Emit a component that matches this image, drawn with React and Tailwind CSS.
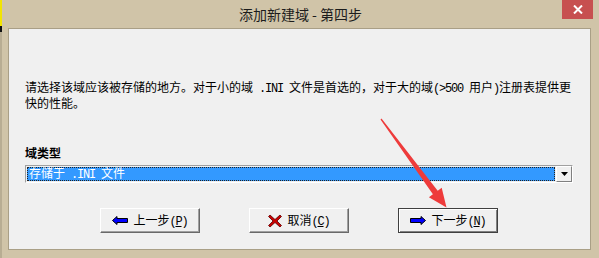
import React from "react";

const cjk = "font-['SimSun','Noto_Sans_CJK_SC',sans-serif]";

function Asc({ children }) {
  return (
    <span className="font-['Liberation_Mono',monospace] tracking-[-1.2px]">{children}</span>
  );
}

function LeftArrow() {
  return (
    <svg width="16" height="9" viewBox="0 0 16 9">
      <polygon points="0.5,4.5 5,0.5 5,2.5 15.5,2.5 15.5,6.5 5,6.5 5,8.5" fill="#0000ff" stroke="#000" strokeWidth="1" />
    </svg>
  );
}

function RightArrow() {
  return (
    <svg width="16" height="9" viewBox="0 0 16 9">
      <polygon points="15.5,4.5 11,0.5 11,2.5 0.5,2.5 0.5,6.5 11,6.5 11,8.5" fill="#0000ff" stroke="#000" strokeWidth="1" />
    </svg>
  );
}

function RedX() {
  return (
    <svg width="14" height="14" viewBox="0 0 14 14">
      <path d="M2 1 L7 5.5 L12 1 L13.5 2.5 L9 7 L13.5 11.5 L12 13 L7 8.5 L2 13 L0.5 11.5 L5 7 L0.5 2.5 Z" fill="#c80000" stroke="#5a0000" strokeWidth="0.8" />
    </svg>
  );
}

function WinButton({ icon, label, hot, isDefault }) {
  return (
    <div
      className={
        "w-[100px] h-[25px] flex items-center justify-center gap-[5px] bg-[#f0f0f0] border " +
        (isDefault
          ? "border-[#404040] shadow-[inset_1px_1px_0_#fff,inset_-1px_-1px_0_#808080]"
          : "border-t-white border-l-white border-b-[#696969] border-r-[#696969] shadow-[inset_-1px_-1px_0_#a0a0a0]")
      }
    >
      {icon}
      <span className={cjk + " text-[12px] leading-[13px] text-black whitespace-nowrap"}>
        {label}
        <Asc>
          (<span className="underline">{hot}</span>)
        </Asc>
      </span>
    </div>
  );
}

export default function App() {
  return (
    <div className="relative w-[599px] h-[258px] flex bg-[#d0c4a8] overflow-hidden">
      <div className="w-[2px] flex flex-col">
        <div className="h-[26px] bg-[#f2e400]" />
        <div className="h-[6px] bg-[#111]" />
        <div className="flex-1 bg-[#b8ad93]" />
      </div>

      <div className="flex-1 flex flex-col">
        <div className="h-[28px] flex items-start">
          <div className="flex-1 pl-[37px] h-[28px] flex items-center justify-center">
            <span className="font-['Noto_Sans_CJK_SC',sans-serif] text-[14px] text-[#1c1c1c] leading-none">
              添加新建域 - 第四步
            </span>
          </div>
          <div className="w-[31px] h-[19px] mr-[6px] bg-[#c75050] flex items-center justify-center">
            <svg width="10" height="9" viewBox="0 0 10 9">
              <path d="M1 0.5 L9 8.5 M9 0.5 L1 8.5" stroke="#fff" strokeWidth="2" />
            </svg>
          </div>
        </div>

        <div className="ml-[6px] mr-[8px] mb-[8px] flex-1 bg-[#f0f0f0] border border-[#a99f86] pl-[16px] pr-[17px] pt-[51px]">
          <p className={cjk + " text-[12px] leading-[13px] text-black whitespace-nowrap"}>
            请选择该域应该被存储的地方。对于小的域<Asc> .INI </Asc>文件是首选的，对于大的域<Asc>(&gt;500 </Asc>用户<Asc>)</Asc>注册表提供更
            <br />
            快的性能。
          </p>

          <div className={cjk + " mt-[37px] text-[12px] leading-[13px] font-bold text-black"}>域类型</div>

          <div className="mt-[6px] w-[548px] h-[18px] flex border border-t-[#a0a0a0] border-l-[#a0a0a0] border-b-white border-r-white">
            <div className="flex-1 m-[1px] bg-[#3399ff] border border-dotted border-[#222] flex items-center pl-[1px]">
              <span className={cjk + " text-[12px] leading-[13px] text-white whitespace-nowrap"}>
                存储于<Asc> .INI </Asc>文件
              </span>
            </div>
            <div className="w-[16px] bg-[#f0f0f0] border border-t-white border-l-white border-b-[#808080] border-r-[#808080] flex items-center justify-center">
              <svg width="7" height="4" viewBox="0 0 7 4">
                <polygon points="0,0 7,0 3.5,4" fill="#000" />
              </svg>
            </div>
          </div>

          <div className="mt-[25px] pl-[75px] flex gap-[49px]">
            <WinButton icon={<LeftArrow />} label="上一步" hot="P" />
            <WinButton icon={<RedX />} label="取消" hot="C" />
            <WinButton icon={<RightArrow />} label="下一步" hot="N" isDefault />
          </div>
        </div>
      </div>

      <svg className="absolute left-0 top-0 pointer-events-none" width="599" height="258" viewBox="0 0 599 258">
        <polygon
          points="381.5,118.6 437.7,190.7 441.7,187.7 446.5,207.5 428.9,197.3 432.9,194.3 380.5,119.4"
          fill="#ee3b3b"
        />
      </svg>
    </div>
  );
}
